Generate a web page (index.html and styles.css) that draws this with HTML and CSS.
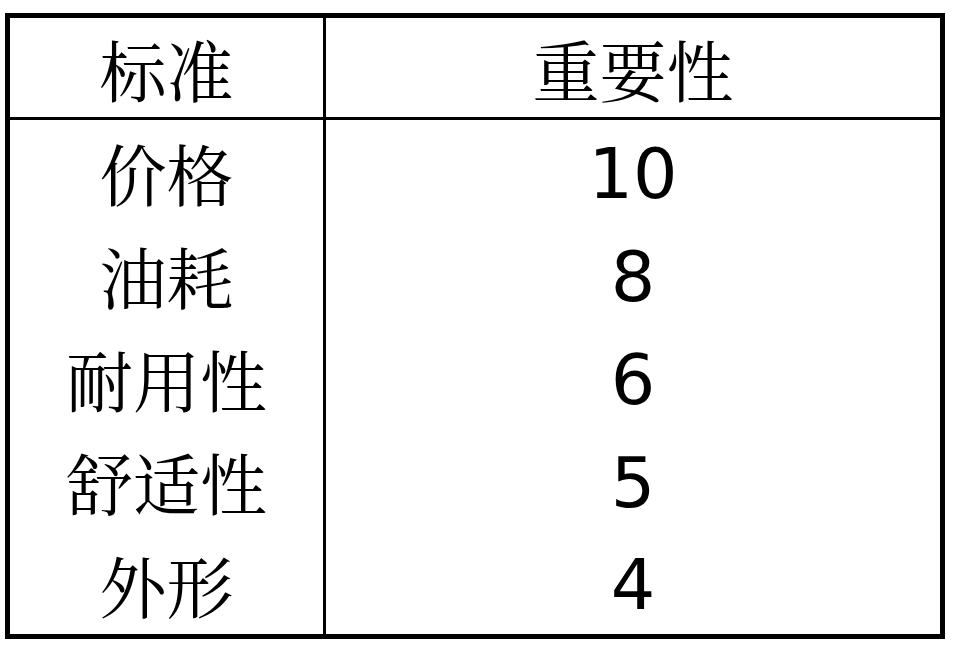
FILE: index.html
```html
<!DOCTYPE html>
<html lang="zh-CN">
<head>
<meta charset="utf-8">
<title>标准与重要性</title>
<link rel="stylesheet" href="styles.css">
</head>
<body>
<table class="grid">
  <thead>
    <tr class="head-row">
      <th class="c-name">标准</th>
      <th class="c-value">重要性</th>
    </tr>
  </thead>
  <tbody>
    <tr class="row"><td class="c-name">价格</td><td class="c-value num">10</td></tr>
    <tr class="row"><td class="c-name">油耗</td><td class="c-value num">8</td></tr>
    <tr class="row"><td class="c-name">耐用性</td><td class="c-value num">6</td></tr>
    <tr class="row"><td class="c-name">舒适性</td><td class="c-value num">5</td></tr>
    <tr class="row"><td class="c-name">外形</td><td class="c-value num">4</td></tr>
  </tbody>
</table>
</body>
</html>
```

FILE: styles.css
```css
html, body {
  margin: 0;
  padding: 0;
  background: #ffffff;
}
body {
  padding: 13px 0 0 5px;
  width: 960px;
  height: 650px;
  box-sizing: border-box;
  overflow: hidden;
}
.grid {
  border-collapse: separate;
  border-spacing: 0;
  border: 5px solid #000;
  width: 940px;
  table-layout: fixed;
  color: #000;
}
.grid th, .grid td {
  padding: 2px 0 0 0;
  text-align: center;
  vertical-align: middle;
  font-weight: normal;
  font-family: "Noto Serif CJK SC", "Noto Sans CJK SC", serif;
  font-size: 67px;
  line-height: 1;
  box-sizing: border-box;
}
.c-name {
  width: 316px;
  border-right: 3px solid #000;
}
.head-row th {
  height: 102px;
  border-bottom: 3px solid #000;
}
.row td {
  height: 103px;
}
.row:last-child td {
  height: 102px;
}
.grid .num {
  padding-top: 4px;
  font-family: "DejaVu Sans", "Liberation Sans", sans-serif;
  font-size: 70px;
}
```
